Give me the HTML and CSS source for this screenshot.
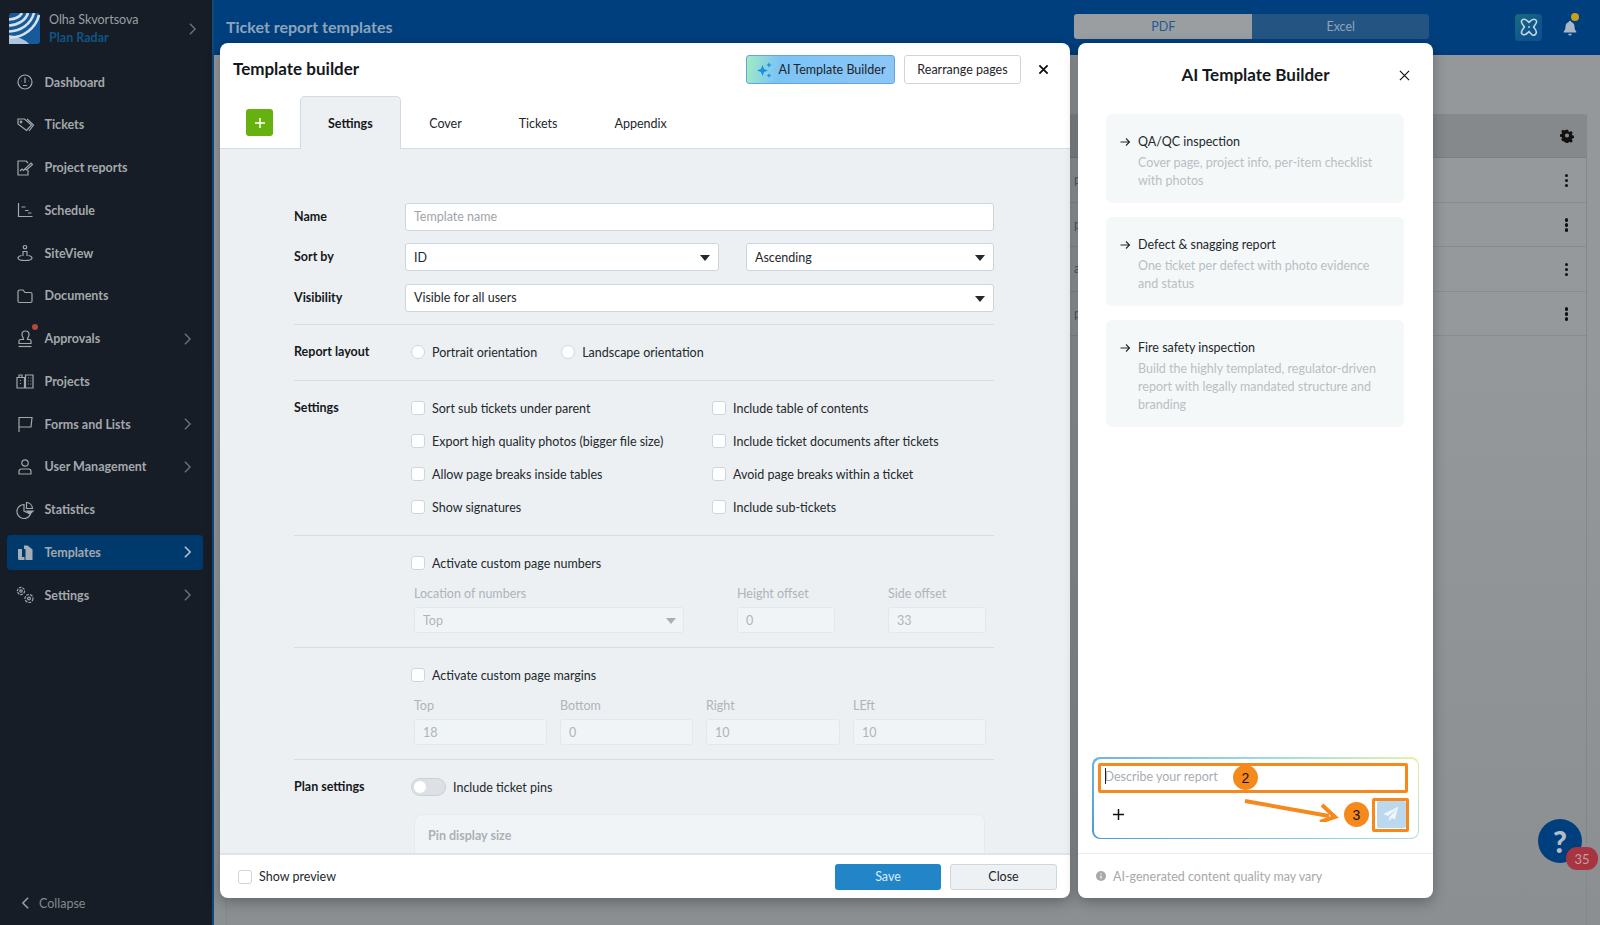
FILE: index.html
```html
<!DOCTYPE html>
<html lang="en">
<head>
<meta charset="utf-8">
<title>Ticket report templates</title>
<link rel="stylesheet" href="styles.css">
</head>
<body>
<div class="app">
  <aside class="sidebar">
    <div class="account">
      <svg class="logo" viewBox="0 0 31 31"><rect width="31" height="31" rx="3" fill="#175a9b"/><path d="M0 22L0 31H20C17 27 8 23 0 22Z" fill="#a9c6dc"/><g fill="none" stroke="#d6e2ea" stroke-width="2.6"><path d="M0 6.500C6 6 11 3.500 13 0"/><path d="M0 12.500C9 12 16.500 7.500 19 0"/><path d="M0 18.500C12 18 22 11 25 0"/><path d="M1 24.500C14 25 27 15 30 2"/></g></svg>
      <div class="account-text">
        <div class="account-name">Olha Skvortsova</div>
        <div class="account-org">Plan Radar</div>
      </div>
      <svg class="chev account-chev" viewBox="0 0 10 16"><path d="M2 2l6 6-6 6"/></svg>
    </div>
    <nav class="nav">
      <a class="nav-item"><svg class="ico" viewBox="0 0 20 20"><circle cx="10" cy="10" r="7"/><path d="M10 5.500v5.500M6 9h.5M13.500 9h.5M8 13.500h4"/></svg><span>Dashboard</span></a>
      <a class="nav-item"><svg class="ico" viewBox="0 0 20 20"><path d="M3 4h6.500l7 6-5 5.500L3 9z"/><path d="M12 4l6.500 6-4.500 6"/><circle cx="6" cy="7" r=".8"/></svg><span>Tickets</span></a>
      <a class="nav-item"><svg class="ico" viewBox="0 0 20 20"><path d="M11 3H3v14h10v-5"/><path d="M5 13l2-2 1.500 1.500L10 11"/><path d="M10 11l6-6 1.500 1.500-6 5.500z"/><path d="M11 3l2 2"/></svg><span>Project reports</span></a>
      <a class="nav-item"><svg class="ico" viewBox="0 0 20 20"><path d="M3.500 3v13.500H17.500"/><path d="M6.500 7h4M10 10.500h3.500M13 13h3.500"/></svg><span>Schedule</span></a>
      <a class="nav-item"><svg class="ico" viewBox="0 0 20 20"><circle cx="10" cy="4.200" r="1.700"/><path d="M8 13V8.500h4V13"/><path d="M6.500 12.500C4 13 3 14 3 15c0 1.500 3 2.500 7 2.500s7-1 7-2.500c0-1-1-2-3.500-2.500"/></svg><span>SiteView</span></a>
      <a class="nav-item"><svg class="ico" viewBox="0 0 20 20"><path d="M3 5.500a1.500 1.500 0 0 1 1.500-1.500h3.500l2 2.500h5.500A1.500 1.500 0 0 1 17 8v7a1.500 1.500 0 0 1-1.500 1.500h-11A1.500 1.500 0 0 1 3 15z"/></svg><span>Documents</span></a>
      <a class="nav-item nav-dot"><svg class="ico" viewBox="0 0 20 20"><path d="M7.500 10.500h-2A1.500 1.500 0 0 0 4 12v2.500h12V12a1.500 1.500 0 0 0-1.500-1.500h-2c0-2 1.500-3 1.500-5a3.500 3.500 0 0 0-7 0c0 2 1.500 3 1.500 5z"/><path d="M3.500 17.500h13"/></svg><span>Approvals</span><svg class="chev" viewBox="0 0 10 16"><path d="M2 2l6 6-6 6"/></svg></a>
      <a class="nav-item"><svg class="ico" viewBox="0 0 20 20"><path d="M2 6.500h7.500v10.500H2zM10.500 4h7.500v13h-7.500z"/><path d="M4 6V4h3v2M5 9.500h1M5 12.500h1M13 7h.8M15.500 7h.8M13 10h.8M15.500 10h.8M13 13h.8M15.500 13h.8"/></svg><span>Projects</span></a>
      <a class="nav-item"><svg class="ico" viewBox="0 0 20 20"><path d="M4 18V3.500h13l-1 9.500H4"/></svg><span>Forms and Lists</span><svg class="chev" viewBox="0 0 10 16"><path d="M2 2l6 6-6 6"/></svg></a>
      <a class="nav-item"><svg class="ico" viewBox="0 0 20 20"><circle cx="10" cy="6" r="3.200"/><path d="M4 17v-2.500A2.500 2.500 0 0 1 6.500 12h7a2.500 2.500 0 0 1 2.500 2.500V17z"/></svg><span>User Management</span><svg class="chev" viewBox="0 0 10 16"><path d="M2 2l6 6-6 6"/></svg></a>
      <a class="nav-item"><svg class="ico" viewBox="0 0 20 20"><path d="M9 4.500a7 7 0 1 0 6.500 9.500L9 11z"/><path d="M11.500 2.500a6.500 6.500 0 0 1 6 6h-6z"/><path d="M12 11h6l-3 3z" fill="currentColor"/></svg><span>Statistics</span></a>
      <a class="nav-item is-active"><svg class="ico ico-solid" viewBox="0 0 20 20"><path d="M3 7h4v8h2.500v3H4.500A1.500 1.500 0 0 1 3 16.500z"/><path d="M9 3.500h3.500l5 4V18h-7V7H9z"/></svg><span>Templates</span><svg class="chev" viewBox="0 0 10 16"><path d="M2 2l6 6-6 6"/></svg></a>
      <a class="nav-item"><svg class="ico ico-gears" viewBox="0 0 20 20"><circle cx="6" cy="6" r="3.600" stroke-dasharray="2.600 1"/><circle cx="6" cy="6" r="1.200"/><circle cx="14" cy="13.500" r="4" stroke-dasharray="2.800 1.100"/><circle cx="14" cy="13.500" r="1.400"/></svg><span>Settings</span><svg class="chev" viewBox="0 0 10 16"><path d="M2 2l6 6-6 6"/></svg></a>
    </nav>
    <div class="collapse">
      <svg class="chev" viewBox="0 0 10 16"><path d="M8 2L2 8l6 6"/></svg>
      <span>Collapse</span>
    </div>
  </aside>
  <main class="main">
    <header class="topbar">
      <h1 class="page-title">Ticket report templates</h1>
      <div class="format-switch">
        <div class="format format-on">PDF</div>
        <div class="format">Excel</div>
      </div>
      <div class="ai-badge"><svg viewBox="0 0 24 24"><g fill="none" stroke="#c4d6e2" stroke-width="1.700"><path d="M5 4c3-2 5 1 7 3 2-2 4-5 7-3s0 5-2 8c2 3 5 5 2 8s-5-1-7-3c-2 2-4 5-7 3s0-5 2-8C5 9 2 6 5 4z"/></g><circle cx="12" cy="12" r="1" fill="#c4d6e2"/></svg></div>
      <div class="bell"><svg viewBox="0 0 20 20"><path d="M10 2a1.300 1.300 0 0 1 1.300 1.300c2.500.6 3.700 2.700 3.700 5.200 0 3.500 1.500 4.500 2 5.500v1H3v-1c.5-1 2-2 2-5.500 0-2.500 1.200-4.600 3.700-5.200A1.300 1.300 0 0 1 10 2zM8 16.500h4a2 2 0 0 1-4 0z" fill="#a9b8c6"/></svg><i class="bell-dot"></i></div>
    </header>
    <div class="content">
      <div class="bg-table">
        <div class="bg-head"><svg class="gear" viewBox="0 0 20 20"><path fill-rule="evenodd" d="M8.300 1h3.400l.5 2.500 1.500.7 2.200-1.300 2.300 2.400-1.300 2.100.6 1.600 2.500.6v3.300l-2.500.6-.6 1.500 1.300 2.200-2.300 2.300-2.200-1.300-1.500.6-.5 2.500H8.300l-.5-2.500-1.600-.6L4 17.500l-2.300-2.300L3 13l-.6-1.500L0 10.900V7.600l2.400-.6L3 5.400 1.700 3.300 4 .9l2.200 1.300 1.600-.7zM10 6.300a3 3 0 1 0 0 6 3 3 0 0 0 0-6z" fill="#111"/></svg></div>
        <div class="bg-row"><span class="stub">project</span><i class="kebab"></i></div>
        <div class="bg-row"><span class="stub">project</span><i class="kebab"></i></div>
        <div class="bg-row"><span class="stub">all</span><i class="kebab"></i></div>
        <div class="bg-row"><span class="stub">project</span><i class="kebab"></i></div>
      </div>
    </div>
  </main>

  <section class="modal builder">
    <div class="builder-head">
      <h2 class="builder-title">Template builder</h2>
      <button class="btn btn-ai"><svg class="sparkle" viewBox="0 0 18 18"><path d="M6.500 4l1.600 3.900L12 9.500l-3.900 1.600L6.500 15l-1.600-3.900L1 9.500l3.900-1.600z" fill="#1a8fe8"/><path d="M13 1l.8 2.200L16 4l-2.200.8L13 7l-.8-2.200L10 4l2.200-.8zM13 12l.7 1.800 1.800.7-1.800.7L13 17l-.7-1.800-1.800-.7 1.800-.7z" fill="#1a8fe8"/></svg>AI Template Builder</button>
      <button class="btn btn-plain">Rearrange pages</button>
      <svg class="x x-bold" viewBox="0 0 12 12"><path d="M1.500 1.500l9 9M10.500 1.500l-9 9"/></svg>
    </div>
    <div class="tabs">
      <button class="add-page"><svg viewBox="0 0 12 12"><path d="M6 1v10M1 6h10"/></svg></button>
      <div class="tab is-active">Settings</div>
      <div class="tab">Cover</div>
      <div class="tab">Tickets</div>
      <div class="tab">Appendix</div>
    </div>
    <div class="form">
      <div class="form-group first">
        <div class="frow"><label class="flabel">Name</label><div class="field grow ph">Template name</div></div>
        <div class="frow"><label class="flabel">Sort by</label><div class="field select w-sort">ID</div><div class="field select w-dir">Ascending</div></div>
        <div class="frow"><label class="flabel">Visibility</label><div class="field select grow">Visible for all users</div></div>
      </div>
      <div class="form-group">
        <div class="frow"><label class="flabel">Report layout</label>
          <div class="opt opt-portrait"><i class="radio"></i>Portrait orientation</div>
          <div class="opt"><i class="radio"></i>Landscape orientation</div>
        </div>
      </div>
      <div class="form-group">
        <div class="frow frow-top"><label class="flabel">Settings</label>
          <div class="check-grid">
            <div class="opt"><i class="box"></i>Sort sub tickets under parent</div>
            <div class="opt"><i class="box"></i>Include table of contents</div>
            <div class="opt"><i class="box"></i>Export high quality photos (bigger file size)</div>
            <div class="opt"><i class="box"></i>Include ticket documents after tickets</div>
            <div class="opt"><i class="box"></i>Allow page breaks inside tables</div>
            <div class="opt"><i class="box"></i>Avoid page breaks within a ticket</div>
            <div class="opt"><i class="box"></i>Show signatures</div>
            <div class="opt"><i class="box"></i>Include sub-tickets</div>
          </div>
        </div>
      </div>
      <div class="form-group indent">
        <div class="opt"><i class="box"></i>Activate custom page numbers</div>
        <div class="dis-row numbers">
          <div class="dis"><div class="dis-label">Location of numbers</div><div class="dis-input dis-select">Top</div></div>
          <div class="dis"><div class="dis-label">Height offset</div><div class="dis-input">0</div></div>
          <div class="dis"><div class="dis-label">Side offset</div><div class="dis-input">33</div></div>
        </div>
      </div>
      <div class="form-group indent">
        <div class="opt"><i class="box"></i>Activate custom page margins</div>
        <div class="dis-row margins">
          <div class="dis"><div class="dis-label">Top</div><div class="dis-input">18</div></div>
          <div class="dis"><div class="dis-label">Bottom</div><div class="dis-input">0</div></div>
          <div class="dis"><div class="dis-label">Right</div><div class="dis-input">10</div></div>
          <div class="dis"><div class="dis-label">LEft</div><div class="dis-input">10</div></div>
        </div>
      </div>
      <div class="form-group">
        <div class="frow"><label class="flabel">Plan settings</label>
          <div class="opt"><i class="toggle"></i>Include ticket pins</div>
        </div>
        <div class="pin-card">Pin display size</div>
      </div>
    </div>
    <div class="builder-foot">
      <div class="opt"><i class="box"></i>Show preview</div>
      <button class="btn btn-save">Save</button>
      <button class="btn btn-close">Close</button>
    </div>
  </section>

  <section class="modal ai-panel">
    <div class="ai-head">
      <h2 class="ai-title">AI Template Builder</h2>
      <svg class="x ai-x" viewBox="0 0 12 12"><path d="M1 1l10 10M11 1L1 11"/></svg>
    </div>
    <div class="prompts">
      <div class="prompt">
        <div class="prompt-title"><svg class="arrow-r" viewBox="0 0 12 12"><path d="M1.500 6h9M7 2.500L10.500 6 7 9.500"/></svg>QA/QC inspection</div>
        <div class="prompt-desc">Cover page, project info, per-item checklist with photos</div>
      </div>
      <div class="prompt">
        <div class="prompt-title"><svg class="arrow-r" viewBox="0 0 12 12"><path d="M1.500 6h9M7 2.500L10.500 6 7 9.500"/></svg>Defect &amp; snagging report</div>
        <div class="prompt-desc">One ticket per defect with photo evidence and status</div>
      </div>
      <div class="prompt">
        <div class="prompt-title"><svg class="arrow-r" viewBox="0 0 12 12"><path d="M1.500 6h9M7 2.500L10.500 6 7 9.500"/></svg>Fire safety inspection</div>
        <div class="prompt-desc">Build the highly templated, regulator-driven report with legally mandated structure and branding</div>
      </div>
    </div>
    <div class="composer">
      <div class="composer-inner">
        <div class="composer-text"><i class="caret"></i>Describe your report</div>
        <div class="composer-actions">
          <svg class="plus" viewBox="0 0 14 14"><path d="M7 1v12M1 7h12"/></svg>
          <div class="send"><svg viewBox="0 0 20 20"><path d="M18 2L1.500 10l5 2.200L16 5 8 13.500V18l3-3.500 3.500 1.500z" fill="#eef5fb"/></svg></div>
        </div>
      </div>
      <div class="mark mark-input"></div>
      <div class="mark mark-send"></div>
      <div class="step step-2">2</div>
      <div class="step step-3">3</div>
      <svg class="mark-arrow" viewBox="0 0 100 24"><path d="M2 3L86 18" fill="none" stroke="#f5891c" stroke-width="4"/><path d="M79 7l13 12-15 5" fill="none" stroke="#f5891c" stroke-width="4"/></svg>
    </div>
    <div class="ai-foot"><svg class="info" viewBox="0 0 10 10"><circle cx="5" cy="5" r="5" fill="#a9a9a9"/><path d="M5 4.500v3M5 2.300v1" stroke="#fff" stroke-width="1.200"/></svg>AI-generated content quality may vary</div>
  </section>

  <div class="help">?<span class="help-count">35</span></div>
</div>
</body>
</html>
```

FILE: styles.css
```css
* { box-sizing: border-box; }
html, body { margin: 0; padding: 0; height: 100%; overflow: hidden; }
body { font-family: "Lato", "Liberation Sans", sans-serif; font-size: 12.5px; color: #1a1f24; }
button { font: inherit; cursor: default; }
h1, h2 { margin: 0; }

.app { position: relative; display: flex; width: 1600px; height: 925px; overflow: hidden; background: #8b8f92; }

/* sidebar */
.sidebar { width: 214px; flex: none; display: flex; flex-direction: column; background: #161d26; border-right: 2px solid #0d4a7e; color: #a4a8ac; }
.account { display: flex; align-items: center; height: 55px; padding: 2px 0 0 9px; flex: none; }
.logo { width: 31px; height: 31px; flex: none; }
.account-text { margin: 0 0 0 9px; line-height: 18px; }
.account-name { color: #9b9fa3; }
.account-org { color: #0f5484; font-weight: 700; }
.account-chev { margin-left: auto; margin-right: 15px; }
.chev { width: 9px; height: 14px; flex: none; fill: none; stroke: #70757a; stroke-width: 1.500; }
.nav { display: flex; flex-direction: column; gap: 7.750px; padding: 9.500px 9px 0 7px; }
.nav-item { position: relative; display: flex; align-items: center; height: 35px; padding: 0 11px 0 8px; border-radius: 4px; font-weight: 700; color: #a4a8ac; }
.nav-item span { margin-left: 9.500px; }
.nav-item .chev { margin-left: auto; }
.nav-dot::before { content: ""; position: absolute; left: 25px; top: 3px; width: 6px; height: 6px; border-radius: 50%; background: #b5483e; }
.is-active.nav-item { background: #003a6d; }
.is-active.nav-item .chev { stroke: #b9c4cf; stroke-width: 1.800; }
.ico { width: 20px; height: 20px; flex: none; fill: none; stroke: #a4a8ac; stroke-width: 1.200; }
.ico-solid { fill: #a4aeb8; stroke: none; }
.collapse { display: flex; align-items: center; margin-top: auto; height: 44px; padding: 0 0 0 21px; color: #85898e; }
.collapse span { margin-left: 9px; }
.collapse .chev { stroke: #9a9ea3; stroke-width: 1.800; }

/* page behind the dialogs */
.main { flex: 1; display: flex; flex-direction: column; min-width: 0; }
.topbar { display: flex; align-items: center; height: 55px; flex: none; background: #003f7d; padding: 0 0 0 12px; }
.page-title { font-size: 16px; font-weight: 700; color: #8ea4bc; margin-top: -2px; }
.format-switch { display: flex; margin-left: 682px; width: 355px; height: 25px; margin-top: -2px; }
.format { flex: 1; display: flex; align-items: center; justify-content: center; background: #245582; color: #8ea4bc; border-radius: 0 3px 3px 0; }
.format-on { background: #9b9ea1; color: #1f5a96; border-radius: 3px 0 0 3px; }
.ai-badge { width: 27px; height: 27px; margin-left: 86px; margin-top: -1px; border-radius: 4px; background: linear-gradient(135deg, #176c7c, #0f528f 70%); display: flex; align-items: center; justify-content: center; }
.ai-badge svg { width: 22px; height: 22px; }
.bell { position: relative; width: 18px; height: 18px; margin-left: 19px; }
.bell svg { width: 18px; height: 18px; display: block; }
.bell-dot { position: absolute; left: 10px; top: -6px; width: 8px; height: 8px; border-radius: 50%; background: #c9a015; }
.content { flex: 1; padding: 59px 13px 0 12px; background: linear-gradient(#95989b 0, #95989b 35%, #8b8f92 100%); }
.bg-table { height: 100%; border-left: 1px solid #83878a; border-right: 1px solid #83878a; }
.bg-head { height: 44px; background: #86898b; border-bottom: 1px solid #7c7f81; display: flex; align-items: center; justify-content: flex-end; padding-right: 12px; border-radius: 3px 3px 0 0; }
.gear { width: 14px; height: 14px; }
.bg-row { position: relative; height: 44.500px; border-bottom: 1px solid #888c90; background: #96999c; padding-left: 847px; display: flex; align-items: center; color: #555a5e; }
.kebab { position: absolute; right: 18px; top: 50%; width: 3.500px; height: 3.500px; margin-top: -6px; border-radius: 50%; background: #111; box-shadow: 0 5px 0 #111, 0 10px 0 #111; }

/* dialogs */
.modal { position: absolute; top: 43px; height: 855px; background: #fff; border-radius: 8px; box-shadow: 0 4px 14px rgba(0, 0, 0, .3); display: flex; flex-direction: column; overflow: hidden; }
.builder { left: 220px; width: 850px; }
.builder-head { display: flex; align-items: flex-start; height: 53px; padding: 12px 0 0 13px; flex: none; }
.builder-title { font-size: 17px; font-weight: 700; color: #15181b; line-height: 27px; margin-right: auto; }
.btn { display: inline-flex; align-items: center; justify-content: center; border-radius: 3px; color: #1f2428; padding: 0; }
.btn-ai { width: 149px; height: 29px; border: 1px solid #62a6e0; background: linear-gradient(100deg, #a3ecc2 0, #7cc4f5 22%, #8cc6f7 100%); }
.sparkle { width: 18px; height: 18px; margin-right: 5px; }
.btn-plain { width: 117px; height: 29px; margin-left: 9px; border: 1px solid #ced6dd; background: #fff; }
.x { fill: none; stroke: #111; }
.x-bold { width: 11px; height: 11px; margin: 9px 21px 0 17px; stroke-width: 2; }
.tabs { display: flex; align-items: flex-end; height: 53px; flex: none; padding-left: 26px; border-bottom: 1px solid #d5dce3; }
.add-page { width: 27px; height: 27px; margin: 0 27px 12px 0; border: 0; border-radius: 3px; background: #66b010; display: flex; align-items: center; justify-content: center; padding: 0; }
.add-page svg { width: 12px; height: 12px; fill: none; stroke: #fff; stroke-width: 1.500; }
.tab { position: relative; top: 1px; height: 53px; padding: 0 27.500px; display: flex; align-items: center; color: #23282c; border: 1px solid transparent; border-bottom: 0; }
.tab.is-active { padding: 0 27px; background: #ecf0f3; border-color: #d3dae1; border-radius: 5px 5px 0 0; font-weight: 700; color: #15181b; }

.form { flex: 1; min-height: 0; overflow: hidden; background: #ecf0f3; padding: 0 76px 0 74px; }
.form-group { border-top: 1px solid #d3dde6; padding: 17.500px 0; }
.form-group.first { border-top: 0; padding: 53.500px 0 12px; }
.form-group.indent { padding: 17.500px 0 13.500px 111px; }
.frow { display: flex; align-items: center; margin-bottom: 12.500px; }
.frow:last-child { margin-bottom: 0; }
.frow-top { align-items: flex-start; }
.flabel { width: 111px; flex: none; font-weight: 700; color: #15181b; line-height: 20px; }
.field { position: relative; height: 28px; padding: 0 8px; display: flex; align-items: center; background: #fff; border: 1px solid #ccd5dd; border-radius: 3px; color: #23282c; }
.grow { flex: 1; }
.ph { color: #9ea4a9; }
.w-sort { width: 314px; margin-right: 27px; }
.w-dir { width: 248px; }
.select::after { content: ""; position: absolute; right: 8px; top: 11px; border: 5px solid transparent; border-top: 6px solid #23282c; border-bottom: 0; }
.opt { display: flex; align-items: center; height: 20px; color: #23282c; }
.opt-portrait { margin-right: 18px; }
.box, .radio { width: 14px; height: 14px; margin: 0 7px 0 6px; flex: none; background: #fff; border: 1px solid #ced6dd; border-radius: 3px; }
.radio { border-radius: 50%; }
.check-grid { display: grid; grid-template-columns: 301px 1fr; row-gap: 13px; }
.dis-row { display: grid; margin: 13px 0 0 9px; column-gap: 13px; }
.numbers { grid-template-columns: 270px 98px 98px; column-gap: 53px; }
.margins { grid-template-columns: 133px 133px 134px 133px; }
.dis-label { height: 16px; line-height: 16px; color: #aeb4b9; }
.dis-input { position: relative; height: 26px; margin-top: 5px; padding: 0 8px; display: flex; align-items: center; background: #f1f4f7; border: 1px solid #e3e8ed; border-radius: 3px; color: #aeb4b9; }
.dis-select::after { content: ""; position: absolute; right: 7px; top: 10px; border: 5px solid transparent; border-top: 6px solid #a9aeb3; border-bottom: 0; }
.toggle { position: relative; width: 35px; height: 18px; margin: 0 7px 0 6px; background: #dde1e5; border: 1px solid #c9d0d6; border-radius: 9px; }
.toggle::after { content: ""; position: absolute; left: 2px; top: 2px; width: 12px; height: 12px; border-radius: 50%; background: #fff; }
.pin-card { margin: 17px 9px 0 120px; height: 80px; padding: 13px; background: #f1f4f7; border: 1px solid #e5eaee; border-radius: 8px; font-weight: 700; color: #a9b0b6; }
.builder-foot { height: 45px; flex: none; display: flex; align-items: center; gap: 9px; padding: 0 13px 0 12px; border-top: 2px solid #dfe4e8; }
.builder-foot .opt { margin-right: auto; }
.btn-save { width: 106px; height: 26px; border: 0; background: #2285c8; color: #d8ecf8; }
.btn-close { width: 107px; height: 26px; border: 1px solid #ced6dd; background: #eef1f4; }

/* AI panel */
.ai-head { position: relative; height: 71px; flex: none; display: flex; align-items: center; justify-content: center; padding-bottom: 9px; }
.ai-panel { left: 1078px; width: 355px; }
.ai-title { font-size: 17px; font-weight: 700; color: #15181b; }
.ai-x { position: absolute; right: 23px; top: 27px; width: 11px; height: 11px; stroke-width: 1.300; }
.prompts { display: flex; flex-direction: column; gap: 14px; padding: 0 29px 0 28px; }
.prompt { padding: 19px 16px 13px 32px; background: #f4f8f9; border-radius: 6px; }
.prompt-title { position: relative; line-height: 18px; color: #23282c; }
.arrow-r { position: absolute; left: -19px; top: 3px; width: 12px; height: 12px; fill: none; stroke: #23282c; stroke-width: 1.100; }
.prompt-desc { margin-top: 3px; line-height: 18px; color: #b9bfc3; }
.composer { position: relative; margin: auto 14px 14px; height: 82px; padding: 1.500px; border-radius: 8px; background: linear-gradient(35deg, #4f9ad6 0, #93d6ee 60%, #e6f3a3 100%); }
.composer-inner { height: 100%; background: #fff; border-radius: 7px; display: flex; flex-direction: column; }
.composer-text { position: relative; height: 40px; padding: 9px 0 0 11px; color: #a8adb2; line-height: 18px; }
.caret { position: absolute; left: 11px; top: 9px; width: 1px; height: 16px; background: #222; }
.composer-actions { display: flex; align-items: center; justify-content: space-between; padding: 2px 12px 0 18px; }
.plus { width: 13px; height: 13px; fill: none; stroke: #111; stroke-width: 1.600; }
.send { width: 29px; height: 27px; background: #bcd8ee; border-radius: 2px; display: flex; align-items: center; justify-content: center; }
.send svg { width: 18px; height: 18px; }
.mark { position: absolute; border: 3px solid #f5891c; border-radius: 2px; }
.mark-input { left: 6px; top: 6px; width: 310px; height: 30px; }
.mark-send { left: 280px; top: 41px; width: 37px; height: 34px; }
.step { position: absolute; width: 25px; height: 25px; border-radius: 50%; background: #f5891c; color: #1a1208; display: flex; align-items: center; justify-content: center; font-size: 14px; font-family: "Liberation Sans", sans-serif; }
.step-2 { left: 141px; top: 8px; }
.step-3 { left: 252px; top: 45px; }
.mark-arrow { position: absolute; left: 151px; top: 41px; width: 100px; height: 24px; }
.ai-foot { height: 45px; flex: none; display: flex; align-items: center; padding-left: 18px; border-top: 1px solid #ebedef; color: #a8a8a8; }
.info { width: 10px; height: 10px; margin-right: 7px; }

.help { position: absolute; left: 1538px; top: 819px; width: 44px; height: 44px; border-radius: 50%; background: #003f7d; color: #b4bcc4; display: flex; align-items: center; justify-content: center; font-weight: 900; font-size: 30px; }
.help-count { position: absolute; left: 28px; top: 28px; width: 32px; height: 23px; border-radius: 11px; background: #a8343f; color: #c79ea2; display: flex; align-items: center; justify-content: center; font-size: 13px; font-weight: 400; }
```
